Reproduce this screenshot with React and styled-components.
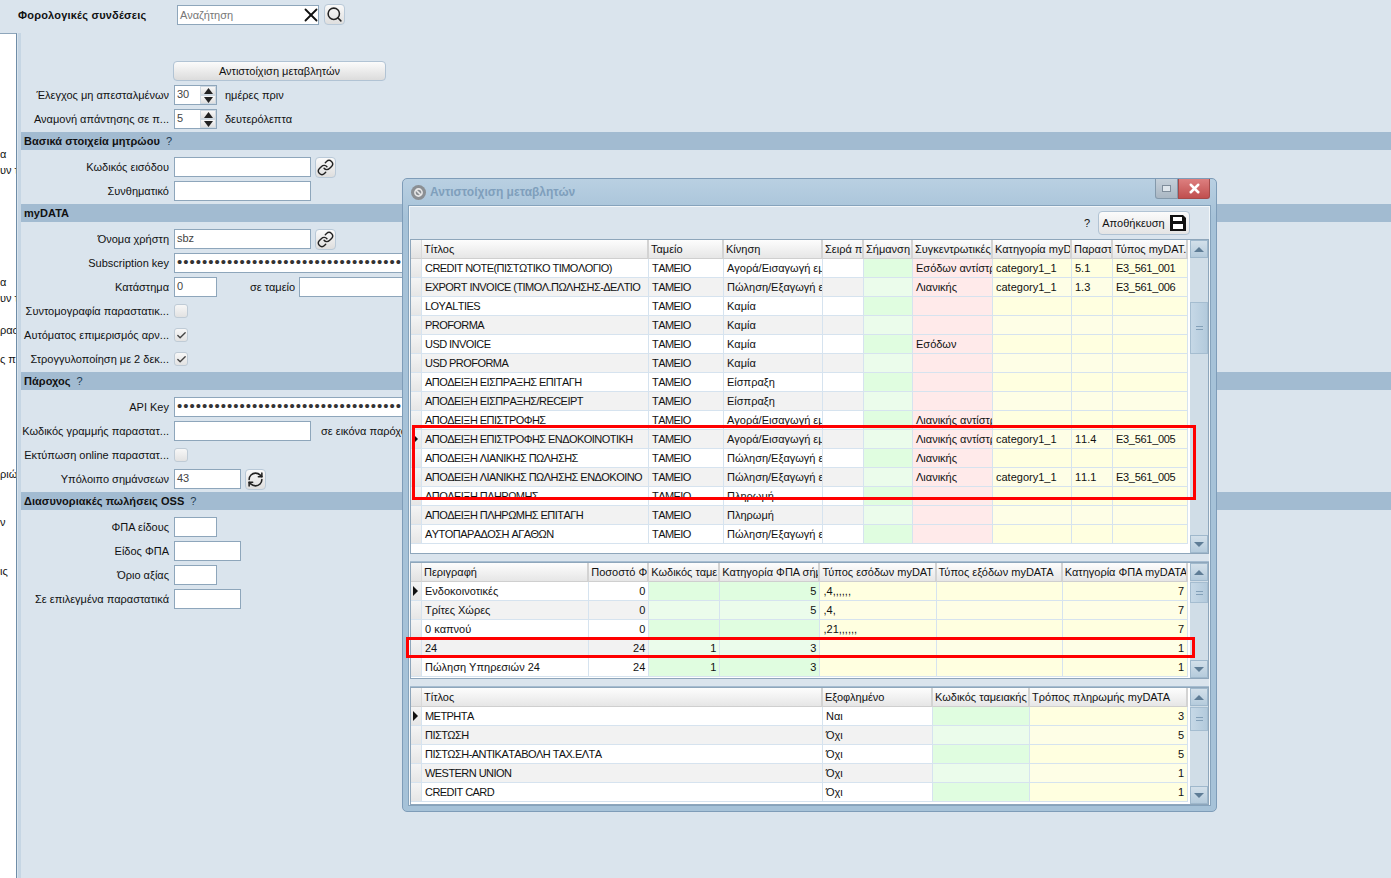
import React from 'react';
import styled, { createGlobalStyle } from 'styled-components';
import { Search, X, Link, RefreshCw, Check } from 'lucide-react';

const GlobalStyle = createGlobalStyle`
html, body { margin: 0; padding: 0; background: #dae4ed; }
body { font-family: "Liberation Sans", Arial, sans-serif; font-size: 11px; color: #111; }
* { box-sizing: border-box; }
`

// ---------- data -------------------------------
const sideLines = [
    { text: 'α', gap: 113 }, { text: 'υν τ', gap: 2 }, { text: 'α', gap: 98 }, { text: 'υν τ', gap: 2 },
    { text: 'ρασ', gap: 18 }, { text: 'ς π', gap: 15 }, { text: 'ριώ', gap: 101 }, { text: 'ν', gap: 34 }, { text: 'ις', gap: 35 },
]

const typeCols = [
    { title: 'Τίτλος', w: 227 }, { title: 'Ταμείο', w: 75 }, { title: 'Κίνηση', w: 99 },
    { title: 'Σειρά π', w: 41 }, { title: 'Σήμανση', w: 49, tone: 'green' },
    { title: 'Συγκεντρωτικές', w: 80, tone: 'pink' }, { title: 'Κατηγορία myD', w: 79, tone: 'yellow' },
    { title: 'Παραστ', w: 41, tone: 'yellow' }, { title: 'Τύπος myDAT.', w: 75, tone: 'yellow' },
]
const buy = 'Αγορά/Εισαγωγή εμ'
const sell = 'Πώληση/Εξαγωγή ε'
const typeRows = [
    ['CREDIT NOTE(ΠΙΣΤΩΤΙΚΟ ΤΙΜΟΛΟΓΙΟ)', 'ΤΑΜΕΙΟ', buy, '', '', 'Εσόδων αντίστρ', 'category1_1', '5.1', 'E3_561_001'],
    ['EXPORT INVOICE (ΤΙΜΟΛ.ΠΩΛΗΣΗΣ-ΔΕΛΤΙΟ', 'ΤΑΜΕΙΟ', sell, '', '', 'Λιανικής', 'category1_1', '1.3', 'E3_561_006'],
    ['LOYALTIES', 'ΤΑΜΕΙΟ', 'Καμία', '', '', '', '', '', ''],
    ['PROFORMA', 'ΤΑΜΕΙΟ', 'Καμία', '', '', '', '', '', ''],
    ['USD INVOICE', 'ΤΑΜΕΙΟ', 'Καμία', '', '', 'Εσόδων', '', '', ''],
    ['USD PROFORMA', 'ΤΑΜΕΙΟ', 'Καμία', '', '', '', '', '', ''],
    ['ΑΠΟΔΕΙΞΗ ΕΙΣΠΡΑΞΗΣ ΕΠΙΤΑΓΗ', 'ΤΑΜΕΙΟ', 'Είσπραξη', '', '', '', '', '', ''],
    ['ΑΠΟΔΕΙΞΗ ΕΙΣΠΡΑΞΗΣ/RECEIPT', 'ΤΑΜΕΙΟ', 'Είσπραξη', '', '', '', '', '', ''],
    ['ΑΠΟΔΕΙΞΗ ΕΠΙΣΤΡΟΦΗΣ', 'ΤΑΜΕΙΟ', buy, '', '', 'Λιανικής αντίστρ', '', '', ''],
    ['ΑΠΟΔΕΙΞΗ ΕΠΙΣΤΡΟΦΗΣ ΕΝΔΟΚΟΙΝΟΤΙΚΗ', 'ΤΑΜΕΙΟ', buy, '', '', 'Λιανικής αντίστρ', 'category1_1', '11.4', 'E3_561_005'],
    ['ΑΠΟΔΕΙΞΗ ΛΙΑΝΙΚΗΣ ΠΩΛΗΣΗΣ', 'ΤΑΜΕΙΟ', sell, '', '', 'Λιανικής', '', '', ''],
    ['ΑΠΟΔΕΙΞΗ ΛΙΑΝΙΚΗΣ ΠΩΛΗΣΗΣ ΕΝΔΟΚΟΙΝΟ', 'ΤΑΜΕΙΟ', sell, '', '', 'Λιανικής', 'category1_1', '11.1', 'E3_561_005'],
    ['ΑΠΟΔΕΙΞΗ ΠΛΗΡΩΜΗΣ', 'ΤΑΜΕΙΟ', 'Πληρωμή', '', '', '', '', '', ''],
    ['ΑΠΟΔΕΙΞΗ ΠΛΗΡΩΜΗΣ ΕΠΙΤΑΓΗ', 'ΤΑΜΕΙΟ', 'Πληρωμή', '', '', '', '', '', ''],
    ['ΑΥΤΟΠΑΡΑΔΟΣΗ ΑΓΑΘΩΝ', 'ΤΑΜΕΙΟ', sell, '', '', '', '', '', ''],
]

const vatCols = [
    { title: 'Περιγραφή', w: 167 }, { title: 'Ποσοστό Φ', w: 60, right: true },
    { title: 'Κωδικός ταμε', w: 71, tone: 'green', right: true }, { title: 'Κατηγορία ΦΠΑ σήμ', w: 100, tone: 'green', right: true },
    { title: 'Τύπος εσόδων myDAT', w: 116, tone: 'yellow' }, { title: 'Τύπος εξόδων myDATA', w: 126, tone: 'yellow' },
    { title: 'Κατηγορία ΦΠΑ myDATA', w: 125, tone: 'yellow', right: true },
]
const vatRows = [
    ['Ενδοκοινοτικές', '0', '', '5', ',4,,,,,,', '', '7'],
    ['Τρίτες Χώρες', '0', '', '5', ',4,', '', '7'],
    ['0 καπνού', '0', '', '', ',21,,,,,,', '', '7'],
    ['24', '24', '1', '3', '', '', '1'],
    ['Πώληση Υπηρεσιών 24', '24', '1', '3', '', '', '1'],
]

const payCols = [
    { title: 'Τίτλος', w: 401 }, { title: 'Εξοφλημένο', w: 110 },
    { title: 'Κωδικός ταμειακής', w: 97, tone: 'green', right: true },
    { title: 'Τρόπος πληρωμής myDATA', w: 158, tone: 'yellow', right: true },
]
const payRows = [
    ['ΜΕΤΡΗΤΑ', 'Ναι', '', '3'],
    ['ΠΙΣΤΩΣΗ', 'Όχι', '', '5'],
    ['ΠΙΣΤΩΣΗ-ΑΝΤΙΚΑΤΑΒΟΛΗ ΤΑΧ.ΕΛΤΑ', 'Όχι', '', '5'],
    ['WESTERN UNION', 'Όχι', '', '1'],
    ['CREDIT CARD', 'Όχι', '', '1'],
]

const dots = '•'.repeat(36)

// capitals are narrower in the original font
const spacingFor = (v) => {
    if (!/[A-ZΑ-Ω]/.test(v) || v !== v.toUpperCase()) return 0
    return /\d/.test(v) ? -0.3 : -0.55
}

// ---------- small parts -------------------------
const Triangle = ({ up }) => (
    <svg width="9" height="6" viewBox="0 0 9 6"><path d={up ? 'M4.5 0L9 6H0z' : 'M0 0h9L4.5 6z'} fill="#222" /></svg>
)

const SaveIcon = () => (
    <svg width="16" height="16" viewBox="0 0 16 16">
        <path d="M0 0h13l3 3v13H0z" fill="#111" />
        <path d="M3 2h9v4H3z" fill="#fff" />
        <path d="M3 9h10v5H3z" fill="#fff" />
    </svg>
)

const BlockedIcon = () => (
    <svg width="15" height="15" viewBox="0 0 15 15">
        <circle cx="7.5" cy="7.5" r="7.5" fill="#8b8f93" />
        <circle cx="7.5" cy="7.5" r="3.6" fill="none" stroke="#e8e8e8" strokeWidth="1.6" />
        <path d="M5 5l5 5" stroke="#e8e8e8" strokeWidth="1.6" />
    </svg>
)

const Scroll = ({ top, height }) => (
    <ScrollBar>
        <ScrollBtn><ScrollUp /></ScrollBtn>
        <ScrollTrack>
            <ScrollThumb $top={top} $height={height}><Grip /></ScrollThumb>
        </ScrollTrack>
        <ScrollBtn><ScrollDown /></ScrollBtn>
    </ScrollBar>
)

const Grid = ({ cols, rows, marked, height, thumbTop, thumbHeight }) => (
    <Pane $height={height}>
        <TableArea>
            <Table>
                <colgroup>
                    <col width="11" />
                    {cols.map((c, i) => <col key={i} width={c.w} />)}
                </colgroup>
                <thead>
                    <tr>
                        <CornerCell />
                        {cols.map((c, i) => <HeadCell key={i}>{c.title}</HeadCell>)}
                    </tr>
                </thead>
                <tbody>
                    {rows.map((r, ri) => (
                        <tr key={ri}>
                            <RowHead>{ri === marked && <Marker />}</RowHead>
                            {r.map((v, ci) => (
                                <Cell key={ci} $alt={ri % 2 === 1} $tone={cols[ci].tone} $right={cols[ci].right} $spacing={spacingFor(v)}>{v}</Cell>
                            ))}
                        </tr>
                    ))}
                </tbody>
            </Table>
        </TableArea>
        <Scroll top={thumbTop} height={thumbHeight} />
    </Pane>
)

const Field = ({ label, children }) => (
    <Row>
        <Label>{label}</Label>
        {children}
    </Row>
)

const Spin = ({ value }) => (
    <SpinBox>
        <SpinValue>{value}</SpinValue>
        <SpinBtns>
            <SpinBtn><Triangle up /></SpinBtn>
            <SpinBtn><Triangle /></SpinBtn>
        </SpinBtns>
    </SpinBox>
)

const App = () => {
    return (
        <React.Fragment>
            <GlobalStyle />
            <Page>
                <TopBar>
                    <PageTitle>Φορολογικές συνδέσεις</PageTitle>
                    <SearchBox>
                        <Placeholder>Αναζήτηση</Placeholder>
                        <ClearIcon><X size={22} strokeWidth={2} color="#111" /></ClearIcon>
                    </SearchBox>
                    <IconBtn $ml={5}><Search size={17} strokeWidth={2.2} color="#222" /></IconBtn>
                </TopBar>
                <Body>
                    <Sidebar>
                        {sideLines.map((l, i) => <SideLine key={i} $gap={l.gap}>{l.text}</SideLine>)}
                    </Sidebar>
                    <Divider />
                    <Main>
                        <WideBtn>Αντιστοίχιση μεταβλητών</WideBtn>
                        <Field label="Έλεγχος μη απεσταλμένων"><Spin value="30" /><Suffix>ημέρες πριν</Suffix></Field>
                        <Field label="Αναμονή απάντησης σε π..."><Spin value="5" /><Suffix>δευτερόλεπτα</Suffix></Field>

                        <Section>Βασικά στοιχεία μητρώου<Help>?</Help></Section>
                        <Field label="Κωδικός εισόδου"><Input $w={137} /><IconBtn $ml={4}><Link size={17} strokeWidth={2} color="#222" /></IconBtn></Field>
                        <Field label="Συνθηματικό"><Input $w={137} /></Field>

                        <Section>myDATA</Section>
                        <Field label="Όνομα χρήστη"><Input $w={137}>sbz</Input><IconBtn $ml={4}><Link size={17} strokeWidth={2} color="#222" /></IconBtn></Field>
                        <Field label="Subscription key"><Input $w={400}><Dots>{dots}</Dots></Input></Field>
                        <Field label="Κατάστημα"><Input $w={43}>0</Input><Inline $ml={33}>σε ταμείο</Inline><Input $w={200} $ml={4} /></Field>
                        <Field label="Συντομογραφία παραστατικ..."><CheckBox /></Field>
                        <Field label="Αυτόματος επιμερισμός αρν..."><CheckBox><Check size={11} strokeWidth={3} color="#444" /></CheckBox></Field>
                        <Field label="Στρογγυλοποίηση με 2 δεκ..."><CheckBox><Check size={11} strokeWidth={3} color="#444" /></CheckBox></Field>

                        <Section>Πάροχος<Help>?</Help></Section>
                        <Field label="API Key"><Input $w={400}><Dots>{dots}</Dots></Input></Field>
                        <Field label="Κωδικός γραμμής παραστατ..."><Input $w={137} /><Inline $ml={10}>σε εικόνα παρόχου</Inline></Field>
                        <Field label="Εκτύπωση online παραστατ..."><CheckBox /></Field>
                        <Field label="Υπόλοιπο σημάνσεων"><Input $w={67}>43</Input><IconBtn $ml={4}><RefreshCw size={17} strokeWidth={2.2} color="#222" /></IconBtn></Field>

                        <Section>Διασυνοριακές πωλήσεις OSS<Help>?</Help></Section>
                        <Field label="ΦΠΑ είδους"><Input $w={43} /></Field>
                        <Field label="Είδος ΦΠΑ"><Input $w={67} /></Field>
                        <Field label="Όριο αξίας"><Input $w={43} /></Field>
                        <Field label="Σε επιλεγμένα παραστατικά"><Input $w={67} /></Field>
                    </Main>
                </Body>

                <Modal>
                    <TitleBar>
                        <TitleIconWrap><BlockedIcon /></TitleIconWrap>
                        <ModalTitle>Αντιστοίχιση μεταβλητών</ModalTitle>
                        <WinButtons>
                            <WinBtn><RestoreGlyph /></WinBtn>
                            <CloseBtn><X size={15} strokeWidth={4} color="#fff" /></CloseBtn>
                        </WinButtons>
                    </TitleBar>
                    <ModalBody>
                        <Toolbar>
                            <ToolHelp>?</ToolHelp>
                            <SaveBtn>Αποθήκευση<SaveIcon /></SaveBtn>
                        </Toolbar>
                        <Grid cols={typeCols} rows={typeRows} marked={9} height={315} thumbTop={44} thumbHeight={52} />
                        <Splitter />
                        <Grid cols={vatCols} rows={vatRows} marked={0} height={117} thumbTop={1} thumbHeight={21} />
                        <Splitter />
                        <Grid cols={payCols} rows={payRows} marked={0} height={118} thumbTop={1} thumbHeight={24} />
                    </ModalBody>
                    <RedBox $l={9} $t={246} $w={784} $h={75} />
                    <RedBox $l={3} $t={458} $w={789} $h={21} />
                </Modal>
            </Page>
        </React.Fragment>
    )
}

export default App;

// ---------- page ---------------------------------
const Page = styled.div`
position: relative;
width: 1391px;
height: 878px;
overflow: hidden;
background: #dae4ed;
`
const TopBar = styled.div`
height: 33px;
display: flex;
align-items: flex-start;
padding: 4px 0 0 18px;
`
const PageTitle = styled.div`
width: 159px;
height: 21px;
line-height: 22px;
font-weight: bold;
font-size: 11px;
letter-spacing: .2px;
`
const SearchBox = styled.div`
width: 142px;
height: 20px;
margin-top: 1px;
display: flex;
align-items: center;
justify-content: space-between;
background: #fff;
border: 1px solid #8ea6bb;
padding: 0 0 0 2px;
`
const Placeholder = styled.span`
color: #777;
`
const ClearIcon = styled.span`
display: flex;
margin-right: -4px;
`
const IconBtn = styled.div`
width: 21px;
height: 21px;
margin-left: ${p => p.$ml || 0}px;
display: flex;
align-items: center;
justify-content: center;
border: 1px solid #b9c9d8;
border-radius: 4px;
background: linear-gradient(#fafafa, #dedede);
flex: none;
`
const Body = styled.div`
display: flex;
height: 845px;
`
const Sidebar = styled.div`
width: 17px;
height: 100%;
background: #fff;
border-top: 1px solid #8ea6bb;
border-right: 1px solid #6f8da8;
overflow: hidden;
`
const SideLine = styled.div`
margin-top: ${p => p.$gap}px;
height: 14px;
line-height: 14px;
white-space: nowrap;
`
const Divider = styled.div`
width: 3px;
margin-left: 1px;
background: #c6d6e4;
`
const Main = styled.div`
width: 1370px;
padding-top: 28px;
flex: none;
`
const WideBtn = styled.div`
width: 213px;
height: 20px;
margin: 0 0 2px 152px;
display: flex;
align-items: center;
justify-content: center;
border: 1px solid #b1c3d4;
border-radius: 4px;
background: linear-gradient(#fbfbfb, #dcdcdc);
`
const Row = styled.div`
display: flex;
align-items: center;
height: 24px;
white-space: nowrap;
`
const Label = styled.div`
width: 148px;
margin-right: 5px;
white-space: nowrap;
flex: none;
display: flex;
justify-content: flex-end;
`
const Input = styled.div`
width: ${p => p.$w}px;
height: 20px;
margin-left: ${p => p.$ml || 0}px;
background: #fff;
border: 1px solid #8ea6bb;
padding: 0 2px;
line-height: 17px;
color: #444;
overflow: hidden;
flex: none;
`
const Dots = styled.span`
font-size: 15px;
line-height: 16px;
letter-spacing: 1px;
color: #333;
`
const Suffix = styled.span`
margin-left: 8px;
`
const Inline = styled.span`
margin-left: ${p => p.$ml || 0}px;
`
const SpinBox = styled.div`
width: 43px;
height: 20px;
display: flex;
background: #fff;
border: 1px solid #8ea6bb;
`
const SpinValue = styled.div`
flex: 1;
padding-left: 2px;
line-height: 17px;
color: #444;
`
const SpinBtns = styled.div`
width: 16px;
display: flex;
flex-direction: column;
`
const SpinBtn = styled.div`
flex: 1;
display: flex;
align-items: center;
justify-content: center;
background: linear-gradient(#f8f8f8, #dfdfdf);
border: 1px solid #cfd9e2;
`
const CheckBox = styled.div`
width: 14px;
height: 14px;
display: flex;
align-items: center;
justify-content: center;
border: 1px solid #bfcbd6;
border-radius: 3px;
background: linear-gradient(#f7f7f7, #e2e2e2);
`
const Section = styled.div`
height: 18px;
margin: 1px 0 5px;
padding-left: 3px;
display: flex;
align-items: center;
background: #a2bbd1;
font-weight: bold;
letter-spacing: .05px;
`
const Help = styled.span`
margin-left: 6px;
font-weight: normal;
color: #1f3a50;
`

// ---------- modal window --------------------------
const Modal = styled.div`
position: absolute;
left: 402px;
top: 178px;
width: 815px;
height: 634px;
display: flex;
flex-direction: column;
padding: 0 5px 6px;
border: 1px solid #7e9cb8;
border-radius: 5px;
background: linear-gradient(#b9d0e2, #a6c2d8 6%, #a6c2d8);
`
const TitleBar = styled.div`
height: 26px;
display: flex;
align-items: flex-start;
padding-left: 3px;
flex: none;
`
const TitleIconWrap = styled.div`
margin-top: 6px;
line-height: 0;
`
const ModalTitle = styled.div`
margin: 6px 0 0 4px;
font-size: 12px;
font-weight: bold;
color: #7f9fbc;
`
const WinButtons = styled.div`
margin: 0 0 0 auto;
display: flex;
`
const WinBtn = styled.div`
width: 23px;
height: 20px;
display: flex;
align-items: center;
justify-content: center;
background: linear-gradient(#c5d0da, #aab7c3);
border: 1px solid #8499ab;
border-top: none;
border-radius: 0 0 0 3px;
`
const RestoreGlyph = styled.div`
width: 9px;
height: 7px;
border: 1px solid #7f8d9b;
background: #dfe6ec;
`
const CloseBtn = styled.div`
width: 32px;
height: 20px;
margin-right: 1px;
display: flex;
align-items: center;
justify-content: center;
background: linear-gradient(#dd7f7f, #c04f4f);
border: 1px solid #a54a4a;
border-top: none;
border-radius: 0 0 3px 0;
`
const ModalBody = styled.div`
flex: 1;
padding: 0 1px;
background: #dae4ed;
border: 1px solid #86a3bc;
box-shadow: inset 0 0 0 1px #f2f6f9;
display: flex;
flex-direction: column;
`
const Toolbar = styled.div`
height: 33px;
flex: none;
display: flex;
align-items: center;
justify-content: flex-end;
padding-right: 19px;
`
const ToolHelp = styled.span`
margin-right: 8px;
`
const SaveBtn = styled.div`
width: 92px;
height: 24px;
display: flex;
align-items: center;
justify-content: center;
gap: 5px;
border: 1px solid #b1c3d4;
border-radius: 4px;
background: linear-gradient(#fbfbfb, #e4e4e4);
`
const Pane = styled.div`
height: ${p => p.$height}px;
flex: none;
display: flex;
border: 1px solid #8ea6bb;
background: #fff;
`
const TableArea = styled.div`
flex: 1;
overflow: hidden;
background: #fff;
`
const Splitter = styled.div`
height: 8px;
flex: none;
border-bottom: 1px solid #a5bcd0;
`
const Table = styled.table`
table-layout: fixed;
width: 777px;
border-collapse: separate;
border-spacing: 0;
font-size: 11px;
`
const HeadCell = styled.th`
height: 19px;
padding: 0 0 0 2px;
font-weight: normal;
text-align: left;
white-space: nowrap;
overflow: hidden;
border-right: 2px solid #d3d3d3;
border-bottom: 1px solid #cfcfcf;
background: linear-gradient(#fdfdfd, #e6e6e6);
`
const CornerCell = styled.th`
padding: 0;
border-right: 1px solid #d9d9d9;
border-bottom: 1px solid #cfcfcf;
background: linear-gradient(#f4f4f4, #e2e2e2);
`
const RowHead = styled.td`
height: 19px;
padding: 0 0 0 2px;
border-right: 1px solid #d6e3ef;
border-bottom: 1px solid #d6e3ef;
background: linear-gradient(#f4f4f4, #e6e6e6);
line-height: 0;
`
const Marker = styled.span`
display: inline-block;
border-left: 5px solid #111;
border-top: 5px solid transparent;
border-bottom: 5px solid transparent;
`
const toneColor = (tone, alt) => {
    if (tone === 'green') return alt ? '#ebfceb' : '#e0fde0'
    if (tone === 'pink') return '#ffeaea'
    if (tone === 'yellow') return alt ? '#fefee6' : '#ffffe0'
    return alt ? '#f2f2f2' : '#fff'
}
const Cell = styled.td`
height: 19px;
padding: 0 3px;
white-space: nowrap;
overflow: hidden;
font-kerning: none;
letter-spacing: ${p => p.$spacing}px;
text-align: ${p => p.$right ? 'right' : 'left'};
border-right: 1px solid #d6e3ef;
border-bottom: 1px solid #d6e3ef;
background: ${p => toneColor(p.$tone, p.$alt)};
`
const ScrollBar = styled.div`
width: 18px;
display: flex;
flex-direction: column;
flex: none;
background: #d0dde7;
`
const ScrollBtn = styled.div`
height: 18px;
flex: none;
display: flex;
align-items: center;
justify-content: center;
background: linear-gradient(#d3e0ea, #b5cbdc);
border: 1px solid #9fb8cc;
`
const ScrollUp = styled.div`
border-left: 5px solid transparent;
border-right: 5px solid transparent;
border-bottom: 5px solid #5f7d96;
`
const ScrollDown = styled.div`
border-left: 5px solid transparent;
border-right: 5px solid transparent;
border-top: 5px solid #5f7d96;
`
const ScrollTrack = styled.div`
flex: 1;
`
const ScrollThumb = styled.div`
margin-top: ${p => p.$top}px;
height: ${p => p.$height}px;
display: flex;
align-items: center;
justify-content: center;
background: linear-gradient(90deg, #c6d8e6, #b3cadc);
border: 1px solid #a5bdd0;
`
const Grip = styled.div`
width: 7px;
height: 4px;
border-top: 1px solid #83a0b8;
border-bottom: 1px solid #83a0b8;
`
const RedBox = styled.div`
position: absolute;
left: ${p => p.$l}px;
top: ${p => p.$t}px;
width: ${p => p.$w}px;
height: ${p => p.$h}px;
border: 3px solid #f00;
`
